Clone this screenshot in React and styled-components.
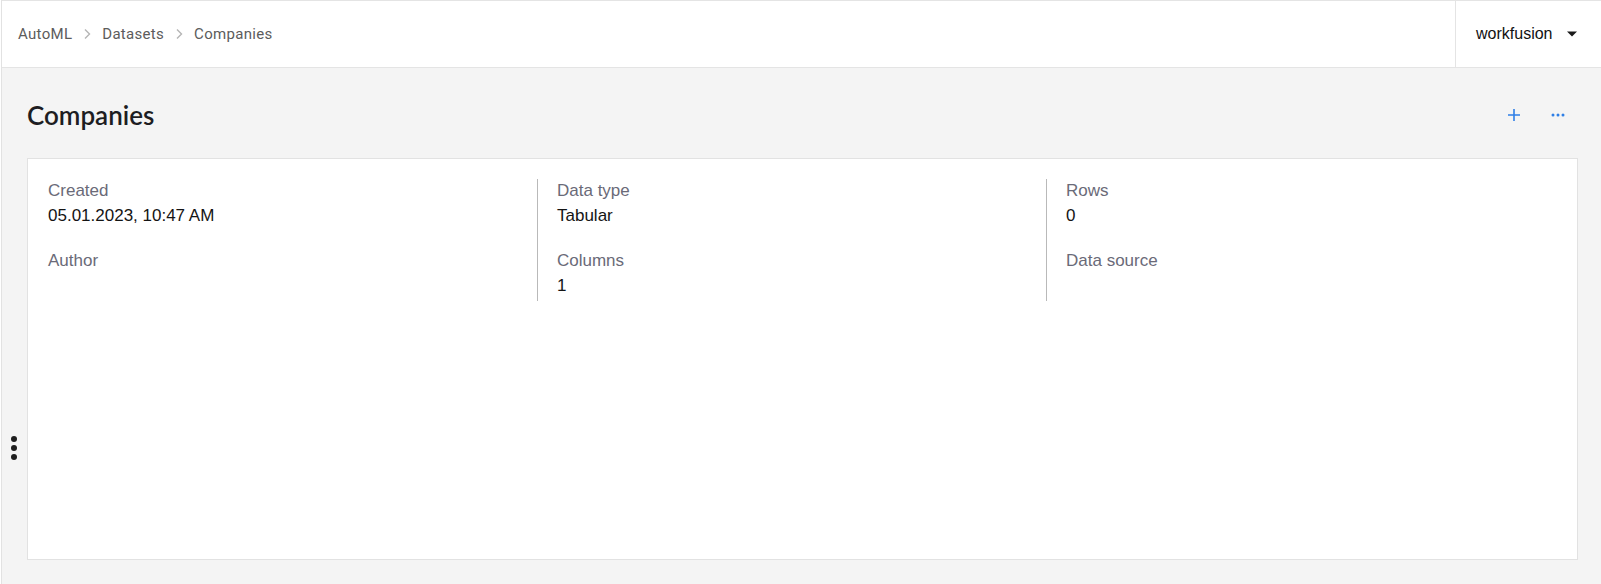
import React from 'react'
import styled, { createGlobalStyle } from 'styled-components'

const GlobalStyle = createGlobalStyle`
  html, body {
    margin: 0;
    padding: 0;
    background: #ffffff;
  }
  * { box-sizing: border-box; }
`

const crumbs = ['AutoML', 'Datasets', 'Companies']

const details = [
  [
    { label: 'Created', value: '05.01.2023, 10:47 AM' },
    { label: 'Author', value: '' },
  ],
  [
    { label: 'Data type', value: 'Tabular' },
    { label: 'Columns', value: '1' },
  ],
  [
    { label: 'Rows', value: '0' },
    { label: 'Data source', value: '' },
  ],
]

function Chevron() {
  return (
    <svg width="14" height="14" viewBox="0 0 14 14" fill="none">
      <path d="M5 2.5 L9.5 7 L5 11.5" stroke="#b5b5b5" strokeWidth="1.4" />
    </svg>
  )
}

function Caret() {
  return (
    <svg width="12" height="8" viewBox="0 0 12 8">
      <path d="M1 1.5 H11 L6 6.5 Z" fill="#1a1a1a" />
    </svg>
  )
}

function PlusIcon() {
  return (
    <svg width="14" height="14" viewBox="0 0 14 14">
      <path d="M7 1 V13 M1 7 H13" stroke="#2f7fe6" strokeWidth="1.6" />
    </svg>
  )
}

function MoreIcon() {
  return (
    <svg width="14" height="4" viewBox="0 0 14 4">
      <circle cx="2" cy="2" r="1.5" fill="#2f7fe6" />
      <circle cx="7" cy="2" r="1.5" fill="#2f7fe6" />
      <circle cx="12" cy="2" r="1.5" fill="#2f7fe6" />
    </svg>
  )
}

function App() {
  return (
    <Shell>
      <GlobalStyle />
      <TopBar>
        <Breadcrumbs>
          {crumbs.map((c, i) => (
            <React.Fragment key={c}>
              {i > 0 && <Chevron />}
              <Crumb>{c}</Crumb>
            </React.Fragment>
          ))}
        </Breadcrumbs>
        <Account>
          <span>workfusion</span>
          <Caret />
        </Account>
      </TopBar>

      <Page>
        <SideHandle>
          <i /><i /><i />
        </SideHandle>
        <TitleRow>
          <Title>Companies</Title>
          <Actions>
            <IconButton><PlusIcon /></IconButton>
            <IconButton><MoreIcon /></IconButton>
          </Actions>
        </TitleRow>

        <Card>
          <Grid>
            {details.map((col, i) => (
              <Column key={i} divided={i > 0}>
                {col.map(f => (
                  <Field key={f.label}>
                    <Label>{f.label}</Label>
                    <Value>{f.value}</Value>
                  </Field>
                ))}
              </Column>
            ))}
          </Grid>
        </Card>
      </Page>
    </Shell>
  )
}

export default App

const Shell = styled.div`
  display: flex;
  flex-direction: column;
  height: 584px;
  margin-left: 1px;
  border-left: 1px solid #e2e2e2;
`

const TopBar = styled.header`
  display: flex;
  justify-content: space-between;
  align-items: stretch;
  height: 68px;
  background: #fff;
  border-top: 1px solid #e4e4e4;
  border-bottom: 1px solid #e4e4e4;
`

const Breadcrumbs = styled.nav`
  display: flex;
  align-items: center;
  gap: 8px;
  padding-left: 16px;
  font-family: Roboto, "Liberation Sans", sans-serif;
  font-size: 15px;
  color: #5c5c5c;
`

const Crumb = styled.span`
  letter-spacing: 0.3px;
`

const Account = styled.div`
  display: flex;
  align-items: center;
  gap: 14px;
  width: 146px;
  padding-left: 20px;
  border-left: 1px solid #e4e4e4;
  font-family: "Liberation Sans", Arial, sans-serif;
  font-size: 16px;
  color: #111;
`

const Page = styled.main`
  position: relative;
  flex: 1;
  display: flex;
  flex-direction: column;
  background: #f4f4f4;
  padding: 0 23px 24px 25px;
`

const SideHandle = styled.div`
  position: absolute;
  left: 9px;
  top: 368px;
  display: flex;
  flex-direction: column;
  gap: 3px;

  i {
    display: block;
    width: 6px;
    height: 6px;
    border-radius: 50%;
    background: #1e1e1e;
  }
`

const TitleRow = styled.div`
  display: flex;
  justify-content: space-between;
  align-items: center;
  height: 90px;
  padding-top: 4px;
`

const Title = styled.h1`
  margin: 0;
  font-family: Lato, "Noto Sans", sans-serif;
  font-weight: 600;
  font-size: 26px;
  color: #1d1d22;
`

const Actions = styled.div`
  display: flex;
  align-items: center;
  gap: 16px;
  margin-right: 6px;
`

const IconButton = styled.button`
  display: flex;
  align-items: center;
  justify-content: center;
  width: 28px;
  height: 28px;
  padding: 0;
  border: none;
  background: transparent;
  cursor: pointer;
`

const Card = styled.section`
  flex: 1;
  background: #fff;
  border: 1px solid #e2e2e2;
  padding: 20px 22px 20px 0;
`

const Grid = styled.div`
  display: grid;
  grid-template-columns: repeat(3, 1fr);
`

const Column = styled.div`
  display: flex;
  flex-direction: column;
  gap: 21px;
  padding-left: 19px;
  padding-bottom: 3px;
  border-left: 1px solid ${p => (p.divided ? '#b9b9b9' : 'transparent')};
`

const Field = styled.div`
  display: flex;
  flex-direction: column;
  font-family: "Liberation Sans", Arial, sans-serif;
  font-size: 17px;
`

const Label = styled.div`
  line-height: 24px;
  color: #6a6a78;
`

const Value = styled.div`
  min-height: 25px;
  line-height: 25px;
  color: #141414;
`
